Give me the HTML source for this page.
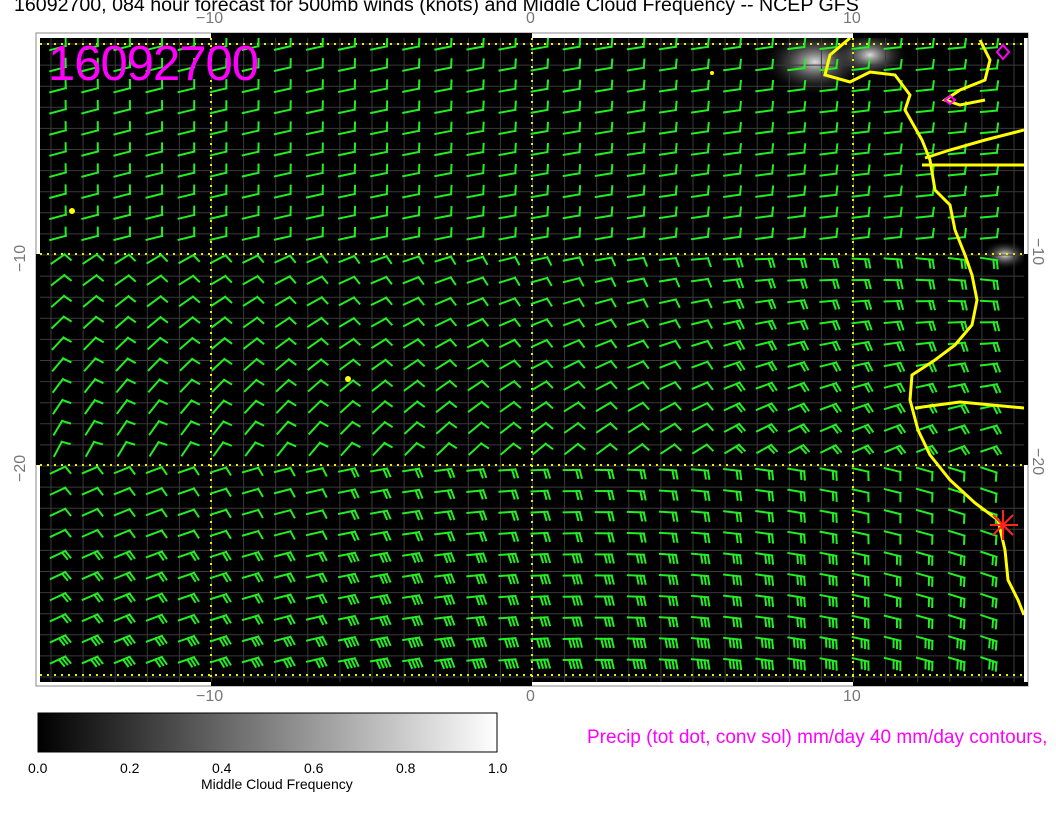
<!DOCTYPE html><html><head><meta charset="utf-8"><style>
body{margin:0;width:1056px;height:816px;background:#fff;overflow:hidden;font-family:"Liberation Sans",sans-serif}
.t{position:absolute;white-space:nowrap;color:#000}
.g{color:#777;font-size:16px}
</style></head><body>
<div class="t" style="left:14px;top:-6px;font-size:19.6px">16092700, 084 hour forecast for 500mb winds (knots) and Middle Cloud Frequency -- NCEP GFS</div>
<div class="t g" style="left:196px;top:10px">−10</div>
<div class="t g" style="left:526px;top:10px">0</div>
<div class="t g" style="left:843px;top:10px">10</div>
<div class="t g" style="left:196px;top:688px">−10</div>
<div class="t g" style="left:526px;top:688px">0</div>
<div class="t g" style="left:843px;top:688px">10</div>
<div class="t g" style="left:12px;top:272px;transform:rotate(-90deg);transform-origin:left top">−10</div>
<div class="t g" style="left:12px;top:482px;transform:rotate(-90deg);transform-origin:left top">−20</div>
<div class="t g" style="left:1046px;top:238px;transform:rotate(90deg);transform-origin:left top">−10</div>
<div class="t g" style="left:1046px;top:448px;transform:rotate(90deg);transform-origin:left top">−20</div>
<svg id="s" width="1056" height="816" style="position:absolute;left:0;top:0">
<defs>
<linearGradient id="cb"><stop offset="0" stop-color="#000"/><stop offset="1" stop-color="#fff"/></linearGradient>
<radialGradient id="cl"><stop offset="0" stop-color="#ddd"/><stop offset="1" stop-color="#000" stop-opacity="0"/></radialGradient>
<clipPath id="pc"><rect x="40" y="38" width="984" height="644"/></clipPath>
</defs>
<rect x="36" y="33" width="992" height="653" fill="#fff" stroke="#888"/>
<rect x="211" y="33" width="321" height="5" fill="#000"/><rect x="853" y="33" width="175" height="5" fill="#000"/>
<rect x="211" y="682" width="321" height="4" fill="#000"/><rect x="853" y="682" width="175" height="4" fill="#000"/>
<rect x="36" y="254" width="4" height="211" fill="#000"/><rect x="1024" y="254" width="4" height="211" fill="#000"/>
<rect x="40" y="38" width="984" height="644" fill="#000"/>
<g clip-path="url(#pc)">
<ellipse cx="815" cy="62" rx="55" ry="35" fill="url(#cl)"/>
<ellipse cx="870" cy="55" rx="40" ry="25" fill="url(#cl)"/>
<ellipse cx="1005" cy="255" rx="25" ry="15" fill="url(#cl)"/>
<g id="grid" stroke="#3a3a3a" stroke-width="1"></g>
<g stroke="#ee0" stroke-width="2" stroke-dasharray="2 5" fill="none">
<line x1="211" y1="38" x2="211" y2="682"/><line x1="532" y1="38" x2="532" y2="682"/><line x1="853" y1="38" x2="853" y2="682"/>
<line x1="40" y1="44" x2="1024" y2="44"/><line x1="40" y1="254" x2="1024" y2="254"/><line x1="40" y1="465" x2="1024" y2="465"/><line x1="40" y1="675" x2="1024" y2="675"/>
</g>
<g id="barbs" stroke="#2e2" stroke-width="2" fill="none" stroke-linecap="square"></g>
<g stroke="#ff0" stroke-width="3" fill="none">
<polyline points="850,38 830,55 825,75 850,82 870,72 895,75 910,95 905,110 922,140 930,160 935,190 950,205 955,230 965,255 972,275 977,300 972,325 955,345 935,360 912,375 910,400 918,430 930,455 950,480 975,503 998,520 1005,550 1008,580 1018,600 1024,615"/>
<polyline points="922,165 1024,165"/>
<polyline points="915,408 960,402 1024,408"/>
<polyline points="1024,130 985,140 950,150 925,158"/>
<polyline points="980,40 990,60 985,80 960,90 945,100 960,105 985,100"/>
</g>
<g fill="#ff0"><circle cx="72" cy="211" r="3"/><circle cx="348" cy="379" r="3"/><circle cx="712" cy="73" r="2"/></g>
<path d="M1003 45 l6 7 -6 7 -6 -7z M950 96 l5 4 -5 4 -5 -4z" stroke="#f0f" fill="none" stroke-width="2"/>
<g stroke="#f22" stroke-width="2"><line x1="990" y1="525" x2="1018" y2="525"/><line x1="1003" y1="510" x2="1003" y2="540"/><line x1="993" y1="515" x2="1013" y2="535"/><line x1="993" y1="535" x2="1013" y2="515"/></g>
</g>
<rect x="38" y="713" width="459" height="39" fill="url(#cb)" stroke="#000"/>
</svg>
<div class="t" style="left:48px;top:36px;font-size:49px;color:#f0f;letter-spacing:-1px">16092700</div>
<div class="t" style="left:28px;top:760px;font-size:14px">0.0</div>
<div class="t" style="left:120px;top:760px;font-size:14px">0.2</div>
<div class="t" style="left:212px;top:760px;font-size:14px">0.4</div>
<div class="t" style="left:304px;top:760px;font-size:14px">0.6</div>
<div class="t" style="left:396px;top:760px;font-size:14px">0.8</div>
<div class="t" style="left:488px;top:760px;font-size:14px">1.0</div>
<div class="t" style="left:201px;top:776px;font-size:14px">Middle Cloud Frequency</div>
<div class="t" style="left:587px;top:727px;font-size:19px;color:#f0f">Precip (tot dot, conv sol) mm/day 40 mm/day contours,</div>
<script>
var ns="http://www.w3.org/2000/svg",gr=document.getElementById('grid'),b=document.getElementById('barbs');
function ln(g,a,c,d,e){var l=document.createElementNS(ns,'line');l.setAttribute('x1',a);l.setAttribute('y1',c);l.setAttribute('x2',d);l.setAttribute('y2',e);g.appendChild(l);}
for(var x=51;x<1024;x+=32.1)ln(gr,x,38,x,682);
for(var y=44;y<682;y+=21.1)ln(gr,40,y,1024,y);
for(var i=0;i<31;i++)for(var j=0;j<31;j++){
 var cx=58+i*32.1,cy=48+j*21.1;if(cx>1020||cy>680)continue;
 var ang,n;
 if(j<10){ang=-15+(i/30)*10;n=1;}
 else if(j<20){ang=-35-(j-10)*3+i*1.5;n=1+(i>20?1:0);}
 else{ang=-25+(i*1.5);n=1+Math.floor((j-20)/4)+(i>8&&i<25?1:0);}
 var r=ang*Math.PI/180,L=16,ux=Math.cos(r),uy=Math.sin(r);
 var x0=cx-ux*L/2,y0=cy-uy*L/2,x1=cx+ux*L/2,y1=cy+uy*L/2;
 ln(b,x0,y0,x1,y1);
 var s=(j<10?-1:1);
 for(var k=0;k<Math.min(n,4);k++){var bx=x1-ux*k*3.5,by=y1-uy*k*3.5;ln(b,bx,by,bx-uy*8*s+ux*2,by+ux*8*s+uy*2);}
}
</script>
</body></html>
